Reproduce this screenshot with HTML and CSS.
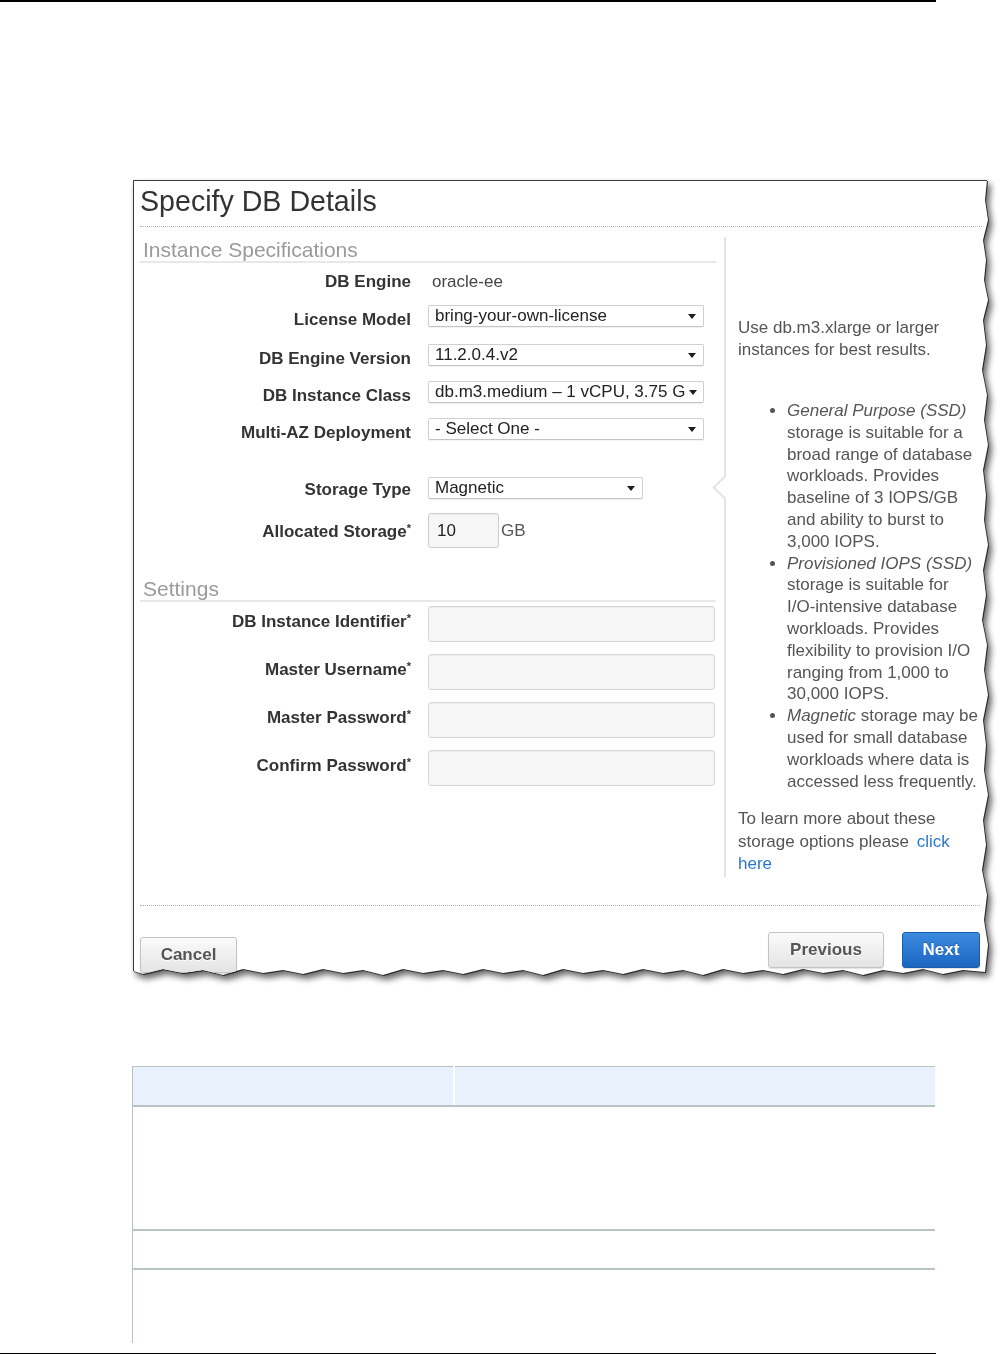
FILE: index.html
```html
<!DOCTYPE html>
<html lang="en">
<head>
<meta charset="utf-8">
<title>Specify DB Details</title>
<link rel="stylesheet" href="styles.css">
</head>
<body>
<div class="page">
  <div class="rule"></div>

  <div class="figure">
    <div class="dialog">
      <h1 class="title">Specify DB Details</h1>

      <div class="content">
        <div class="form">
          <h2 class="section">Instance Specifications</h2>

          <div class="row row-static">
            <div class="label">DB Engine</div>
            <div class="value">oracle-ee</div>
          </div>

          <div class="row row-license">
            <div class="label">License Model</div>
            <div class="select w-select"><span class="sel-text">bring-your-own-license</span><span class="caret"></span></div>
          </div>

          <div class="row row-version">
            <div class="label">DB Engine Version</div>
            <div class="select w-select"><span class="sel-text">11.2.0.4.v2</span><span class="caret"></span></div>
          </div>

          <div class="row row-class">
            <div class="label">DB Instance Class</div>
            <div class="select w-select"><span class="sel-text">db.m3.medium – 1 vCPU, 3.75 G</span><span class="caret"></span></div>
          </div>

          <div class="row row-multiaz">
            <div class="label">Multi-AZ Deployment</div>
            <div class="select w-select"><span class="sel-text">- Select One -</span><span class="caret"></span></div>
          </div>

          <div class="row row-storage">
            <div class="label label-tight">Storage Type</div>
            <div class="select w-storage"><span class="sel-text">Magnetic</span><span class="caret"></span></div>
          </div>

          <div class="row row-alloc">
            <div class="label">Allocated Storage<span class="req">*</span></div>
            <div class="alloc">
              <div class="input w-alloc">10</div>
              <span class="unit">GB</span>
            </div>
          </div>

          <h2 class="section section-settings">Settings</h2>

          <div class="row row-text first">
            <div class="label">DB Instance Identifier<span class="req">*</span></div>
            <div class="input w-text"></div>
          </div>
          <div class="row row-text">
            <div class="label">Master Username<span class="req">*</span></div>
            <div class="input w-text"></div>
          </div>
          <div class="row row-text">
            <div class="label">Master Password<span class="req">*</span></div>
            <div class="input w-text"></div>
          </div>
          <div class="row row-text">
            <div class="label">Confirm Password<span class="req">*</span></div>
            <div class="input w-text"></div>
          </div>
        </div>

        <div class="help">
          <span class="notch"></span>
          <p class="help-intro">Use db.m3.xlarge or larger instances for best results.</p>
          <ul class="help-list">
            <li><em>General Purpose (SSD)</em> storage is suitable for a broad range of database workloads. Provides baseline of 3 IOPS/GB and ability to burst to 3,000 IOPS.</li>
            <li><em>Provisioned IOPS (SSD)</em> storage is suitable for <span class="nowrap">I/O-intensive</span> database workloads. Provides flexibility to provision I/O ranging from 1,000 to 30,000 IOPS.</li>
            <li><em>Magnetic</em> storage may be used for small database workloads where data is accessed less frequently.</li>
          </ul>
          <p class="help-more">To learn more about these storage options please <a class="link" href="#">click here</a></p>
        </div>
      </div>

      <div class="footer">
        <button class="btn btn-cancel" type="button">Cancel</button>
        <div class="footer-right">
          <button class="btn btn-prev" type="button">Previous</button>
          <button class="btn btn-primary" type="button">Next</button>
        </div>
      </div>
    </div>
  </div>

  <table class="tbl">
    <thead>
      <tr class="tbl-head"><th class="c1"></th><th class="c2"></th></tr>
    </thead>
    <tbody>
      <tr class="tr-a"><td></td><td></td></tr>
      <tr class="tr-b"><td></td><td></td></tr>
      <tr class="tr-c"><td></td><td></td></tr>
    </tbody>
  </table>

  <div class="rule rule-bottom"></div>
</div>
</body>
</html>
```

FILE: styles.css
```css
* { box-sizing: border-box; }

html, body {
  margin: 0;
  padding: 0;
  background: #fff;
}

body {
  font-family: "Liberation Sans", Arial, sans-serif;
  color: #333;
}

.page {
  width: 1005px;
  height: 1354px;
  overflow: hidden;
}

.rule {
  width: 936px;
  height: 2px;
  background: #000;
}

.rule-bottom {
  margin-top: 10px;
}

/* ---------- screenshot figure ---------- */

.figure {
  margin: 178px 0 0 133px;
  width: 855px;
  height: 795px;
  filter: drop-shadow(1px 1px 0 #2a2a2a) drop-shadow(3px 4px 3px rgba(0, 0, 0, 0.6));
}

.dialog {
  width: 855px;
  height: 795px;
  background: #fff;
  border-top: 1px solid #3a3a3a;
  border-left: 1px solid #3a3a3a;
  clip-path: polygon(0 0, 854px 0, 852px 20px, 855px 40px, 850px 60px, 853px 80px, 851px 100px, 855px 120px, 850px 140px, 853px 165px, 849px 190px, 854px 215px, 851px 240px, 855px 265px, 850px 290px, 853px 315px, 851px 340px, 855px 365px, 850px 390px, 853px 415px, 849px 440px, 854px 465px, 851px 490px, 855px 515px, 850px 540px, 853px 565px, 851px 590px, 855px 615px, 850px 640px, 853px 665px, 849px 690px, 854px 715px, 851px 740px, 855px 765px, 852px 792px, 830px 790px, 810px 794px, 790px 789px, 770px 793px, 750px 790px, 730px 795px, 710px 790px, 690px 793px, 670px 789px, 650px 794px, 630px 790px, 610px 793px, 590px 789px, 570px 795px, 550px 790px, 530px 793px, 510px 789px, 490px 794px, 470px 790px, 450px 793px, 430px 789px, 410px 795px, 390px 790px, 370px 793px, 350px 789px, 330px 794px, 310px 790px, 290px 793px, 270px 789px, 250px 795px, 230px 790px, 210px 793px, 190px 789px, 170px 794px, 150px 790px, 130px 793px, 110px 789px, 90px 795px, 70px 790px, 50px 793px, 30px 789px, 10px 794px, 0 791px);
}

.title {
  margin: 0 6px 0 6px;
  padding: 4px 0 9px 0;
  font-size: 28.6px;
  line-height: 32px;
  font-weight: normal;
  color: #333;
  border-bottom: 1px dotted #b5b5b5;
}

.content {
  display: flex;
  gap: 8px;
  height: 650px;
  padding: 10px 0 0 6px;
}

/* ---------- form column ---------- */

.form {
  flex: 0 0 576px;
}

.section {
  margin: 1px 0 0 0;
  padding-left: 3px;
  font-size: 21px;
  line-height: 23px;
  font-weight: normal;
  color: #9a9a9a;
  border-bottom: 2px solid #e8e8e8;
}

.section-settings {
  margin-top: 29px;
}

.row {
  display: grid;
  grid-template-columns: 271px auto;
  column-gap: 17px;
  align-items: start;
  height: 22px;
}

.label {
  margin-top: 4px;
  text-align: right;
  font-size: 17px;
  line-height: 22px;
  font-weight: bold;
  color: #333;
  white-space: nowrap;
}

.label-tight { margin-top: 2px; }

.req {
  font-size: 11px;
  vertical-align: 5px;
  font-weight: bold;
}

.row-static {
  margin-top: 7px;
  height: 24px;
  align-items: center;
}

.row-static .label { margin-top: 0; }

.value {
  padding-left: 4px;
  font-size: 17px;
  line-height: 22px;
  color: #444;
}

.row-license { margin-top: 11px; }
.row-version { margin-top: 17px; }
.row-class { margin-top: 15px; }
.row-multiaz { margin-top: 15px; }
.row-storage { margin-top: 37px; }
.row-alloc { margin-top: 14px; height: 35px; }

.row-text { margin-top: 12px; height: 36px; }
.row-text.first { margin-top: 4px; }
.row-text .label { margin-top: 1px; }

.select {
  display: flex;
  align-items: center;
  justify-content: space-between;
  height: 22px;
  padding: 0 7px 0 6px;
  border: 1px solid #d0d0d0;
  border-bottom-color: #c4c4c4;
  border-radius: 2px;
  background: #fff;
  box-shadow: 0 1px 1px rgba(0, 0, 0, 0.06);
}

.w-select { width: 276px; }
.w-storage { width: 215px; }

.sel-text {
  flex: 1 1 auto;
  white-space: nowrap;
  font-size: 17px;
  line-height: 20px;
  color: #222;
}

.caret {
  flex: 0 0 auto;
  margin-left: 4px;
  width: 0;
  height: 0;
  border-left: 4px solid transparent;
  border-right: 4px solid transparent;
  border-top: 5px solid #1e1e1e;
}

.alloc {
  display: flex;
  align-items: center;
  gap: 2px;
}

.input {
  border: 1px solid #d6d6d6;
  border-radius: 3px;
  background: #f6f6f6;
  box-shadow: inset 0 1px 1px rgba(0, 0, 0, 0.04);
}

.w-alloc {
  width: 71px;
  height: 35px;
  padding-left: 8px;
  font-size: 17px;
  line-height: 33px;
  color: #222;
  border-color: #cdcdcd;
}

.unit {
  font-size: 17px;
  color: #555;
}

.w-text {
  width: 287px;
  height: 36px;
}

/* ---------- help column ---------- */

.help {
  position: relative;
  flex: 0 0 261px;
  height: 640px;
  padding: 0 3px 0 12px;
  border-left: 2px solid #e4e4e4;
  font-size: 17px;
  color: #555;
}

.notch {
  position: absolute;
  left: -10px;
  top: 242px;
  width: 17px;
  height: 17px;
  background: #fff;
  border-left: 2px solid #e4e4e4;
  border-bottom: 2px solid #e4e4e4;
  transform: rotate(45deg);
}

.help-intro {
  margin: 80px 0 0 0;
  line-height: 22px;
}

.help-list {
  margin: 39px 0 0 0;
  padding-left: 49px;
  line-height: 21.8px;
  list-style: disc;
}

.help-list em {
  font-style: italic;
}

.nowrap {
  white-space: nowrap;
}

.help-more {
  margin: 16px 0 0 0;
  line-height: 22.5px;
}

.link {
  margin-left: 3px;
  color: #2a78cf;
  text-decoration: none;
}

/* ---------- footer ---------- */

.footer {
  display: flex;
  justify-content: space-between;
  align-items: flex-start;
  margin: 28px 8px 0 6px;
  padding-top: 26px;
  border-top: 1px dotted #b5b5b5;
}

.footer-right {
  display: flex;
  gap: 18px;
}

.btn {
  height: 36px;
  padding: 0;
  font-family: "Liberation Sans", Arial, sans-serif;
  font-size: 17px;
  font-weight: bold;
  color: #555;
  background: linear-gradient(#fbfbfb, #e4e4e4);
  border: 1px solid #c3c3c3;
  border-radius: 3px;
  box-shadow: 0 1px 1px rgba(0, 0, 0, 0.12);
  text-shadow: 0 1px 0 #fff;
}

.btn-cancel {
  margin-top: 5px;
  width: 97px;
}

.btn-prev {
  width: 116px;
}

.btn-primary {
  width: 78px;
  color: #fff;
  background: linear-gradient(#3b8be0, #1c66c2);
  border-color: #1a5cae;
  text-shadow: 0 -1px 0 rgba(0, 0, 0, 0.25);
}

/* ---------- table ---------- */

.tbl {
  margin: 91px 0 0 132px;
  width: 803px;
  border-collapse: collapse;
  border-spacing: 0;
}

.tbl th,
.tbl td {
  padding: 0;
}

.tbl-head th {
  height: 39px;
  background: #e9f2fc;
  border-top: 1px solid #b9c3c3;
  border-bottom: 2px solid #b9c3c3;
}

.tbl-head .c1 {
  width: 321px;
  border-left: 1px solid #b9c3c3;
  border-right: 2px solid #fff;
}

.tbl td:first-child {
  border-left: 1px solid #b9c3c3;
}

.tr-a td {
  height: 124px;
  border-bottom: 2px solid #b9c3c3;
}

.tr-b td {
  height: 39px;
  border-bottom: 2px solid #b9c3c3;
}

.tr-c td {
  height: 74px;
}
```
